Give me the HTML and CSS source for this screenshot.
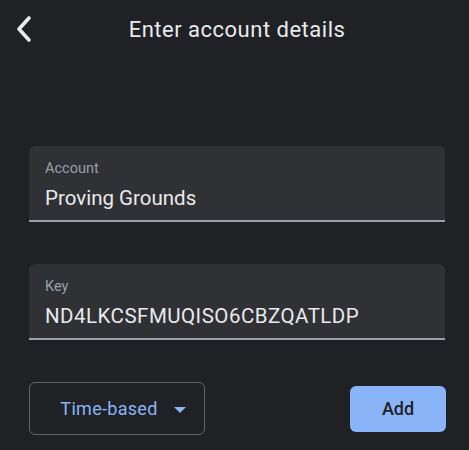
FILE: index.html
```html
<!DOCTYPE html>
<html>
<head>
<meta charset="utf-8">
<link rel="stylesheet" href="styles.css">
</head>
<body>
<div class="screen">
  <header class="topbar">
    <button class="back" aria-label="Back">
      <svg width="18" height="28" viewBox="0 0 18 28"><path d="M14 3 L4 14 L14 25" fill="none" stroke="#e8eaed" stroke-width="3.6" stroke-linecap="round" stroke-linejoin="round"/></svg>
    </button>
    <h1 class="title">Enter account details</h1>
  </header>
  <main class="form">
    <div class="field">
      <div class="label">Account</div>
      <div class="value">Proving Grounds</div>
    </div>
    <div class="field field-key">
      <div class="label">Key</div>
      <div class="value value-key">ND4LKCSFMUQISO6CBZQATLDP</div>
    </div>
    <div class="actions">
      <button class="select">Time-based <span class="caret"></span></button>
      <button class="add">Add</button>
    </div>
  </main>
</div>
</body>
</html>
```
FILE: styles.css
```css
html, body {
  margin: 0;
  padding: 0;
  background: #202124;
}
body {
  font-family: Roboto, "Noto Sans", sans-serif;
  color: #e8eaed;
  width: 469px;
  height: 450px;
  overflow: hidden;
}
.topbar {
  position: relative;
  height: 56px;
  display: flex;
  align-items: center;
  justify-content: center;
}
.back {
  position: absolute;
  left: 15px;
  top: 15px;
  padding: 0;
  border: 0;
  background: none;
  line-height: 0;
}
.title {
  margin: 2px 0 0 5px;
  font-size: 22px;
  font-weight: 400;
  color: #e8eaed;
  letter-spacing: 0.5px;
}
.form {
  padding: 90px 24px 0 29px;
}
.field {
  background: #303134;
  border-radius: 6px 6px 0 0;
  border-bottom: 2px solid #9aa0a6;
  padding: 14px 16px 0;
  box-sizing: content-box;
  height: 60px;
}
.field-key {
  margin-top: 42px;
}
.label {
  font-size: 14.5px;
  color: #9aa0a6;
  line-height: 17px;
}
.value {
  font-size: 20.5px;
  line-height: 24px;
  margin-top: 9px;
  color: #e8eaed;
}
.value-key {
  letter-spacing: 0.48px;
}
.actions {
  margin-top: 42px;
  display: flex;
  justify-content: space-between;
  align-items: center;
  margin-right: -1px;
}
.select {
  width: 176px;
  height: 53px;
  border: 1px solid #5f6368;
  border-radius: 6px;
  background: transparent;
  color: #8ab4f8;
  font-family: inherit;
  font-size: 18px;
  letter-spacing: 0.3px;
  display: flex;
  align-items: center;
  justify-content: center;
  gap: 16px;
  padding: 0 0 0 12px;
}
.caret {
  width: 0;
  height: 0;
  border-left: 6px solid transparent;
  border-right: 6px solid transparent;
  border-top: 6px solid #8ab4f8;
  margin-top: 2px;
}
.add {
  width: 96px;
  height: 46px;
  border: 0;
  border-radius: 6px;
  background: #8ab4f8;
  color: #202124;
  font-family: inherit;
  font-size: 18px;
  font-weight: 500;
}
```
